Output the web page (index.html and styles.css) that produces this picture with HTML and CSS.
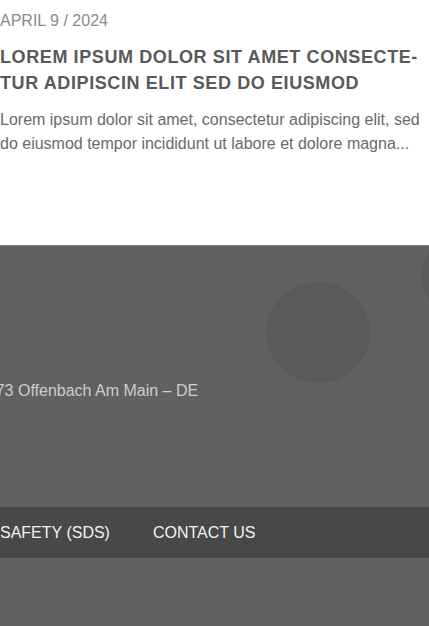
FILE: index.html
```html
<!DOCTYPE html>
<html lang="en">
<head>
<meta charset="utf-8">
<title>News</title>
<link rel="stylesheet" href="styles.css">
</head>
<body>
<article class="post">
  <div class="post-date">APRIL 9 / 2024</div>
  <h2 class="post-title">LOREM IPSUM DOLOR SIT AMET CONSECTE-TUR ADIPISCIN ELIT SED DO EIUSMOD</h2>
  <p class="post-excerpt">Lorem ipsum dolor sit amet, consectetur adipiscing elit, sed do eiusmod tempor incididunt ut labore et dolore magna...</p>
</article>
<footer class="site-footer">
  <span class="deco deco-a"></span>
  <span class="deco deco-b"></span>
  <p class="address">63073 Offenbach Am Main – DE</p>
  <nav class="footer-nav">
    <a class="nav-link" href="#">SAFETY (SDS)</a>
    <a class="nav-link" href="#">CONTACT US</a>
  </nav>
  <div class="footer-bottom"></div>
</footer>
</body>
</html>
```
FILE: styles.css
```css
html, body {
  margin: 0;
  padding: 0;
  background: #ffffff;
  font-family: "Liberation Sans", Arial, sans-serif;
  overflow: hidden;
}

.post {
  padding: 11px 0 0 0;
  height: 234px;
  box-sizing: border-box;
}

.post-date {
  font-size: 16px;
  line-height: 20px;
  color: #8a8a8a;
}

.post-title {
  margin: 13px 0 0 0;
  font-size: 18px;
  line-height: 26px;
  font-weight: bold;
  letter-spacing: 0.6px;
  color: #595959;
}

.post-excerpt {
  margin: 12px 0 0 0;
  font-size: 16px;
  line-height: 24px;
  color: #6a6a6a;
}

.site-footer {
  position: relative;
  overflow: hidden;
  background: #616161;
  border-top: 1px solid #7d7d7d;
  margin-top: 11px;
  padding-top: 133px;
}

.deco {
  position: absolute;
  border-radius: 50%;
  background: #5a5a5a;
}

.deco-a {
  left: 266px;
  top: 36px;
  width: 104px;
  height: 101px;
}

.deco-b {
  left: 421px;
  top: -7px;
  width: 74px;
  height: 74px;
}

.address {
  position: relative;
  margin: 0;
  font-size: 16px;
  line-height: 24px;
  color: #cccccc;
  text-indent: -31px;
  white-space: nowrap;
}

.footer-nav {
  margin-top: 104px;
  height: 51px;
  background: #484848;
  display: flex;
  gap: 43px;
  align-items: center;
}

.nav-link {
  font-size: 16px;
  line-height: 51px;
  color: #f2f2f2;
  text-decoration: none;
  white-space: nowrap;
}

.footer-bottom {
  height: 80px;
}
```
